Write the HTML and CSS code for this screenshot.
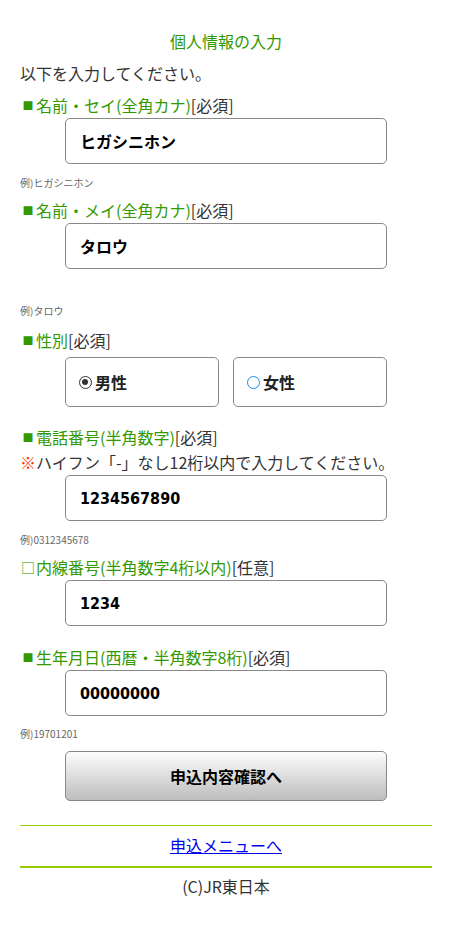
FILE: index.html
```html
<!DOCTYPE html>
<html lang="ja">
<head>
<meta charset="utf-8">
<title>個人情報の入力</title>
<link rel="stylesheet" href="styles.css">
</head>
<body>
<div class="page">
  <h1 class="title">個人情報の入力</h1>
  <p class="intro">以下を入力してください。</p>

  <div class="label"><span class="mark">■</span><span class="g">名前・セイ(全角カナ)</span>[必須]</div>
  <div class="field">ヒガシニホン</div>
  <div class="example">例)ヒガシニホン</div>

  <div class="label mt8"><span class="mark">■</span><span class="g">名前・メイ(全角カナ)</span>[必須]</div>
  <div class="field">タロウ</div>
  <div class="example mt35">例)タロウ</div>

  <div class="label mt10"><span class="mark">■</span><span class="g">性別</span>[必須]</div>
  <div class="radios">
    <div class="radio"><span class="dot on"></span>男性</div>
    <div class="radio"><span class="dot off"></span>女性</div>
  </div>

  <div class="label mt18"><span class="mark">■</span><span class="g">電話番号(半角数字)</span>[必須]</div>
  <div class="note"><span class="red">※</span>ハイフン「-」なし12桁以内で入力してください。</div>
  <div class="field num">1234567890</div>
  <div class="example">例)0312345678</div>

  <div class="label mt8"><span class="mark open">□</span><span class="g">内線番号(半角数字4桁以内)</span>[任意]</div>
  <div class="field num">1234</div>

  <div class="label mt19"><span class="mark">■</span><span class="g">生年月日(西暦・半角数字8桁)</span>[必須]</div>
  <div class="field num">00000000</div>
  <div class="example mt11">例)19701201</div>

  <div class="button">申込内容確認へ</div>

  <div class="rule-thin"></div>
  <div class="menu"><a href="#">申込メニューへ</a></div>
  <div class="rule-thick"></div>
  <div class="footer">(C)JR東日本</div>
</div>
</body>
</html>
```

FILE: styles.css
```css
html, body {
  margin: 0;
  padding: 0;
  background: #fff;
}
body {
  font-family: "Noto Sans CJK JP", "Noto Sans", sans-serif;
  font-size: 16px;
  color: #333;
}
.page {
  width: 412px;
  padding: 29px 20px 20px;
}
.title {
  margin: 0 0 8px;
  height: 24px;
  font-size: 16px;
  font-weight: normal;
  line-height: 24px;
  text-align: center;
  color: #339900;
}
.intro {
  margin: 0 0 8px;
  height: 24px;
  line-height: 24px;
}
.label {
  height: 24px;
  line-height: 24px;
  margin-bottom: 1px;
  white-space: nowrap;
  display: flex;
  align-items: center;
}
.mark {
  display: inline-block;
  width: 16px;
  font-size: 11px;
  line-height: 24px;
  height: 24px;
  color: #339900;
  text-align: center;
}
.mark.open {
  font-size: 14px;
}
.g {
  color: #339900;
}
.note {
  height: 24px;
  line-height: 24px;
  margin-bottom: 1px;
  white-space: nowrap;
}
.red {
  color: #ff3300;
}
.field {
  box-sizing: border-box;
  width: 322px;
  height: 46px;
  margin: 0 auto;
  padding: 0 14px;
  border: 1px solid #888;
  border-radius: 5px;
  display: flex;
  align-items: center;
  font-weight: bold;
  color: #000;
  font-size: 16px;
}
.field.num {
  font-family: "DejaVu Sans Condensed", "DejaVu Sans", sans-serif;
  font-stretch: condensed;
  font-size: 16px;
}
.example {
  margin-top: 12px;
  height: 14px;
  font-size: 10px;
  line-height: 14px;
  color: #666;
}
.mt8 { margin-top: 8px; }
.mt10 { margin-top: 10px; }
.mt11 { margin-top: 11px; }
.mt18 { margin-top: 18px; }
.mt19 { margin-top: 19px; }
.mt35 { margin-top: 35px; }
.radios {
  width: 322px;
  margin: 5px auto 0;
  display: flex;
  gap: 14px;
}
.radio {
  box-sizing: border-box;
  flex: 1;
  height: 50px;
  border: 1px solid #888;
  border-radius: 5px;
  display: flex;
  align-items: center;
  padding-left: 13px;
  font-weight: bold;
  color: #222;
}
.dot {
  box-sizing: border-box;
  width: 13px;
  height: 13px;
  border-radius: 50%;
  margin-right: 3px;
  position: relative;
}
.dot.on {
  border: 1.5px solid #333;
}
.dot.on::after {
  content: "";
  position: absolute;
  left: 2px;
  top: 2px;
  width: 6px;
  height: 6px;
  border-radius: 50%;
  background: #333;
}
.dot.off {
  border: 1.5px solid #1e88e5;
}
.button {
  box-sizing: border-box;
  width: 322px;
  height: 50px;
  margin: 10px auto 0;
  border: 1px solid #888;
  border-radius: 5px;
  background: linear-gradient(#fdfdfd, #bdbdbd);
  display: flex;
  align-items: center;
  justify-content: center;
  font-weight: bold;
  color: #000;
}
.rule-thin {
  margin-top: 24px;
  height: 1px;
  background: #99cc00;
}
.menu {
  margin-top: 7px;
  height: 24px;
  line-height: 24px;
  text-align: center;
}
.menu a {
  color: #0000ee;
  text-decoration: underline;
}
.rule-thick {
  margin-top: 9px;
  height: 2px;
  background: #99cc00;
}
.footer {
  margin-top: 6px;
  height: 24px;
  line-height: 24px;
  text-align: center;
  color: #333;
}
```
